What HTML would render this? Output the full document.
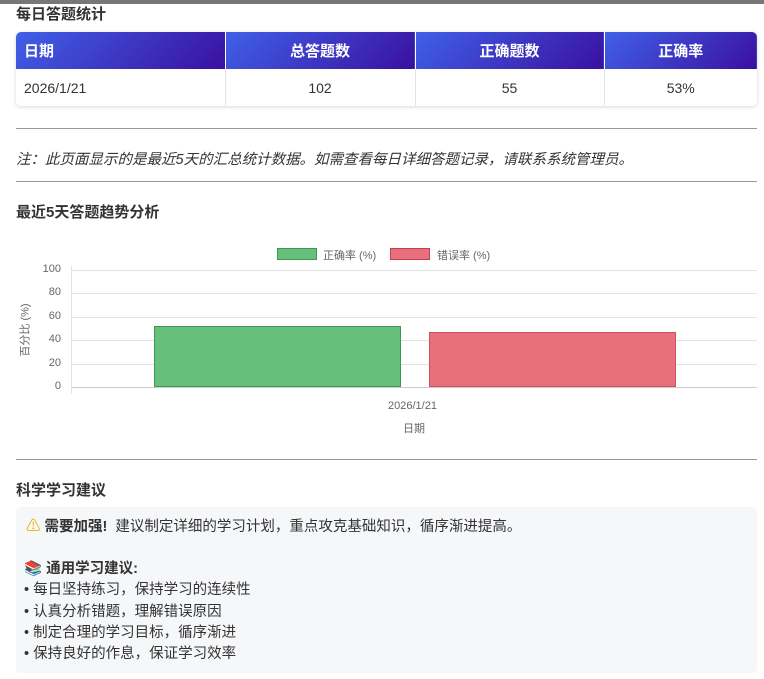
<!DOCTYPE html><html><head><meta charset="utf-8"><style>
body{margin:0;width:764px;height:679px;overflow:hidden;background:#fff;font-family:"Liberation Sans","Noto Sans CJK SC",sans-serif;color:#333;position:relative}
.a{position:absolute}
.top{left:0;top:0;width:764px;height:4px;background:#777}
table{position:absolute;left:16px;top:32px;width:741px;table-layout:fixed;border-collapse:collapse;box-shadow:0 1px 4px rgba(0,0,0,.15);border-radius:5px;overflow:hidden;font-size:14px}
th{height:37px;padding:0;color:#fff;font-weight:bold;background:linear-gradient(135deg,#4060e8,#3a10a0);font-size:15px;border-right:1px solid #fff}
td{height:37px;padding:0;text-align:center;border-right:1px solid #e4e4e4;color:#333}
hr{position:absolute;left:16px;width:741px;margin:0;border:0;border-top:1px solid #999}
h3{position:absolute;left:16px;margin:0;font-size:15px;font-weight:bold;color:#333}
.grid{position:absolute;left:71px;width:686px;height:1px;background:#e3e3e3}
.yl{position:absolute;width:30px;text-align:right;left:31px;font-size:11px;color:#666}
</style></head><body>
<div class="a top"></div>
<h3 style="top:3px">每日答题统计</h3>
<table><colgroup><col style="width:209px"><col style="width:190px"><col style="width:189px"><col style="width:153px"></colgroup><tr><th style="text-align:left;padding-left:8px">日期</th><th>总答题数</th><th>正确题数</th><th style="border:0">正确率</th></tr>
<tr><td style="text-align:left;padding-left:8px">2026/1/21</td><td>102</td><td>55</td><td style="border:0">53%</td></tr></table>
<hr style="top:128px">
<div class="a" style="left:16px;top:148px;font-size:14.5px;font-style:italic;color:#333">注：此页面显示的是最近5天的汇总统计数据。如需查看每日详细答题记录，请联系系统管理员。</div>
<hr style="top:181px">
<h3 style="top:201px">最近5天答题趋势分析</h3>
<div class="a" style="left:277px;top:248px;width:40px;height:12px;background:#66bf7a;border:1px solid #3a9a50;box-sizing:border-box"></div>
<div class="a" style="left:323px;top:247px;font-size:11px;color:#666">正确率 (%)</div>
<div class="a" style="left:390px;top:248px;width:40px;height:12px;background:#e86f7c;border:1px solid #c84050;box-sizing:border-box"></div>
<div class="a" style="left:437px;top:247px;font-size:11px;color:#666">错误率 (%)</div>
<div class="grid" style="top:270px"></div><div class="grid" style="top:293px"></div><div class="grid" style="top:317px"></div><div class="grid" style="top:340px"></div><div class="grid" style="top:364px"></div><div class="grid" style="top:387px;background:#ccc"></div>
<div class="a" style="left:71px;top:266px;width:1px;height:128px;background:#e3e3e3"></div>
<div class="yl" style="top:263px">100</div><div class="yl" style="top:286px">80</div><div class="yl" style="top:310px">60</div><div class="yl" style="top:333px">40</div><div class="yl" style="top:357px">20</div><div class="yl" style="top:380px">0</div>
<div class="a" style="left:-2px;top:322px;font-size:11px;color:#666;transform:rotate(-90deg)">百分比 (%)</div>
<div class="a" style="left:154px;top:326px;width:247px;height:61px;background:#66bf7a;border:1px solid #3a9a50;box-sizing:border-box"></div>
<div class="a" style="left:429px;top:332px;width:247px;height:55px;background:#e86f7c;border:1px solid #d05060;box-sizing:border-box"></div>
<div class="a" style="left:388px;top:400px;font-size:11px;color:#666">2026/1/21</div>
<div class="a" style="left:403px;top:420px;font-size:11px;color:#666">日期</div>
<hr style="top:459px">
<h3 style="top:479px">科学学习建议</h3>
<div class="a" style="left:16px;top:507px;width:741px;height:166px;background:#f6f7f9;border-radius:4px"></div>
<div class="a" style="left:26px;top:516px;font-size:14.5px;line-height:22px;color:#333"><span style="color:#e8b400">⚠</span> <b>需要加强!</b>&nbsp; 建议制定详细的学习计划，重点攻克基础知识，循序渐进提高。</div>
<div class="a" style="left:24px;top:559px;font-size:14.5px;line-height:21.3px;color:#333"><b>📚 通用学习建议:</b><br>• 每日坚持练习，保持学习的连续性<br>• 认真分析错题，理解错误原因<br>• 制定合理的学习目标，循序渐进<br>• 保持良好的作息，保证学习效率</div>
</body></html>
